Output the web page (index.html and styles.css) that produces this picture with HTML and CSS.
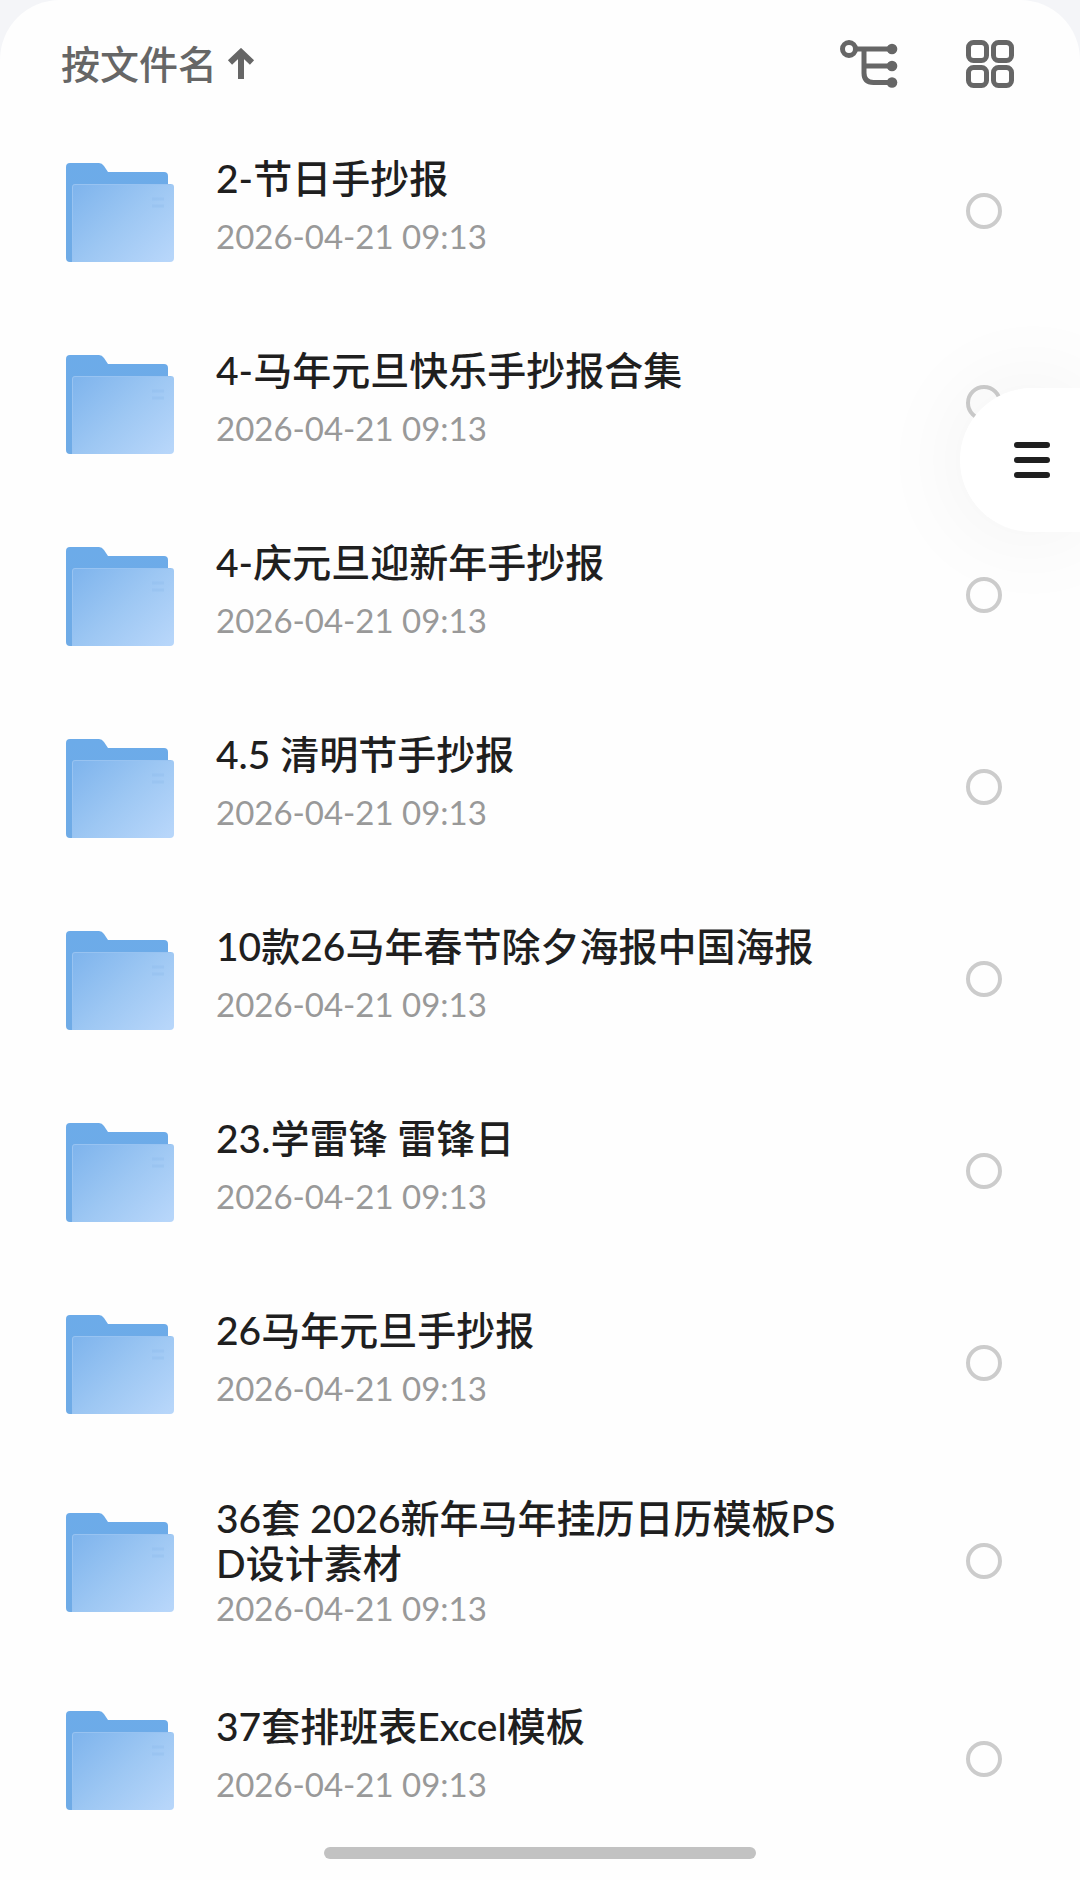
FILE: index.html
```html
<!DOCTYPE html>
<html lang="zh-CN">
<head>
<meta charset="utf-8">
<meta name="viewport" content="width=device-width, initial-scale=1">
<title>文件列表</title>
<link rel="stylesheet" href="styles.css">
</head>
<body>
<svg class="defs" aria-hidden="true">
  <defs>
    <linearGradient id="back" x1="0" y1="0" x2="0" y2="1">
      <stop offset="0" stop-color="#6cabe9"/>
      <stop offset="1" stop-color="#6fabe6"/>
    </linearGradient>
    <linearGradient id="front" x1="0" y1="0.1" x2="1" y2="0.9">
      <stop offset="0" stop-color="#80b5ed"/>
      <stop offset="0.5" stop-color="#9dc7f3"/>
      <stop offset="1" stop-color="#b7d6fa"/>
    </linearGradient>
    <symbol id="folder" viewBox="0 0 108 100">
      <path fill="url(#back)" d="M0 4a4 4 0 0 1 4-4h29q3 0 5 3l4 6h56a4 4 0 0 1 4 4v86H4a4 4 0 0 1-4-4z"/>
      <path fill="url(#front)" d="M6 24a3 3 0 0 1 3-3h96a3 3 0 0 1 3 3v71a4 4 0 0 1-4 4H6z"/>
      <path fill="none" stroke="#98c3f1" stroke-width="1" d="M6.500 98V24a2.500 2.500 0 0 1 2.500-2.500h96"/>
      <path fill="none" stroke="#8bb9ea" stroke-width="3" opacity=".35" d="M86 36h12M86 43h12"/>
    </symbol>
  </defs>
</svg>
<main class="panel">
  <header class="toolbar">
    <button class="sort" type="button">按文件名
      <svg class="sort-arrow" viewBox="0 0 28 32" aria-hidden="true"><path d="M14 31V5M3 14.500L14 4l11 10.500" fill="none" stroke="currentColor" stroke-width="6"/></svg>
    </button>
    <div class="actions">
      <button class="icon-button" type="button" aria-label="目录树">
        <svg class="tree-icon" viewBox="0 0 58 48" fill="none" stroke="currentColor" stroke-width="5" aria-hidden="true">
          <circle cx="9" cy="9" r="6.500"/>
          <path d="M17 9h35M24 9v24q0 9.500 9.500 9.500H52M24 26h28"/>
          <g fill="currentColor" stroke="none"><circle cx="52" cy="9" r="5.300"/><circle cx="52" cy="26" r="5.300"/><circle cx="52" cy="42.500" r="5.300"/></g>
        </svg>
      </button>
      <button class="icon-button" type="button" aria-label="网格视图">
        <svg class="grid-icon" viewBox="0 0 48 48" fill="none" stroke="currentColor" stroke-width="5" aria-hidden="true">
          <rect x="2.500" y="2.500" width="18" height="18" rx="5"/><rect x="27.500" y="2.500" width="18" height="18" rx="5"/>
          <rect x="2.500" y="27.500" width="18" height="18" rx="5"/><rect x="27.500" y="27.500" width="18" height="18" rx="5"/>
        </svg>
      </button>
    </div>
  </header>
  <ul class="files">
    <li><label class="file"><svg class="folder" aria-hidden="true"><use href="#folder"/></svg><span class="info"><span class="name">2-节日手抄报</span><time class="date">2026-04-21 09:13</time></span><input class="check" type="checkbox"></label></li>
    <li><label class="file"><svg class="folder" aria-hidden="true"><use href="#folder"/></svg><span class="info"><span class="name">4-马年元旦快乐手抄报合集</span><time class="date">2026-04-21 09:13</time></span><input class="check" type="checkbox"></label></li>
    <li><label class="file"><svg class="folder" aria-hidden="true"><use href="#folder"/></svg><span class="info"><span class="name">4-庆元旦迎新年手抄报</span><time class="date">2026-04-21 09:13</time></span><input class="check" type="checkbox"></label></li>
    <li><label class="file"><svg class="folder" aria-hidden="true"><use href="#folder"/></svg><span class="info"><span class="name">4.5 清明节手抄报</span><time class="date">2026-04-21 09:13</time></span><input class="check" type="checkbox"></label></li>
    <li><label class="file"><svg class="folder" aria-hidden="true"><use href="#folder"/></svg><span class="info"><span class="name">10款26马年春节除夕海报中国海报</span><time class="date">2026-04-21 09:13</time></span><input class="check" type="checkbox"></label></li>
    <li><label class="file"><svg class="folder" aria-hidden="true"><use href="#folder"/></svg><span class="info"><span class="name">23.学雷锋 雷锋日</span><time class="date">2026-04-21 09:13</time></span><input class="check" type="checkbox"></label></li>
    <li><label class="file"><svg class="folder" aria-hidden="true"><use href="#folder"/></svg><span class="info"><span class="name">26马年元旦手抄报</span><time class="date">2026-04-21 09:13</time></span><input class="check" type="checkbox"></label></li>
    <li><label class="file"><svg class="folder" aria-hidden="true"><use href="#folder"/></svg><span class="info"><span class="name">36套 2026新年马年挂历日历模板PSD设计素材</span><time class="date">2026-04-21 09:13</time></span><input class="check" type="checkbox"></label></li>
    <li><label class="file"><svg class="folder" aria-hidden="true"><use href="#folder"/></svg><span class="info"><span class="name">37套排班表Excel模板</span><time class="date">2026-04-21 09:13</time></span><input class="check" type="checkbox"></label></li>
  </ul>
</main>
<button class="drawer" type="button" aria-label="菜单">
  <svg class="menu-icon" viewBox="0 0 36 36" aria-hidden="true"><path d="M3 3h30M3 18h30M3 33h30" stroke="currentColor" stroke-width="6" stroke-linecap="round"/></svg>
</button>
<div class="home-bar"></div>
</body>
</html>
```
FILE: styles.css
```css
* {
  box-sizing: border-box;
}

body {
  margin: 0;
  background: #f4f5f8;
  color: #1f1f1f;
  font-family: Lato, "Noto Sans CJK SC", sans-serif;
}

button {
  display: flex;
  align-items: center;
  padding: 0;
  border: 0;
  background: none;
  color: #666;
  font: inherit;
}

.defs {
  position: absolute;
  width: 0;
  height: 0;
}

.panel {
  min-height: 100vh;
  padding-bottom: 24px;
  border-radius: 60px 60px 0 0;
  background: #fefefe;
}

.toolbar {
  display: flex;
  align-items: center;
  justify-content: space-between;
  padding: 40px 66px 27px 61px;
}

.sort {
  gap: 10px;
  height: 48px;
  font-size: 39px;
  font-weight: 500;
  line-height: 44px;
}

.sort-arrow {
  width: 28px;
  height: 32px;
}

.actions {
  display: flex;
  gap: 68px;
}

.tree-icon {
  width: 58px;
  height: 48px;
}

.grid-icon {
  width: 48px;
  height: 48px;
}

.files {
  margin: 0;
  padding: 0;
  list-style: none;
}

.file {
  display: flex;
  align-items: center;
  min-height: 192px;
  padding: 37px 78px 37px 66px;
}

.folder {
  flex: none;
  width: 108px;
  height: 104px;
  padding-top: 4px;
}

.info {
  display: flex;
  flex: 1;
  flex-direction: column;
  justify-content: space-between;
  min-height: 110px;
  max-height: 130px;
  margin: 0 104px 0 42px;
  padding-bottom: 8px;
}

.name {
  flex: none;
  font-size: 39px;
  font-weight: 500;
  line-height: 45px;
  word-break: break-all;
}

.date {
  flex: none;
  color: #999;
  font-size: 33px;
  line-height: 44px;
}

.check {
  flex: none;
  width: 36px;
  height: 36px;
  margin: 0;
  border: 4px solid #ccc;
  border-radius: 50%;
  appearance: none;
}

.check:checked {
  border-color: #4a90e2;
  background: #4a90e2;
}

.drawer {
  position: fixed;
  top: 388px;
  right: 0;
  width: 120px;
  height: 144px;
  padding-left: 54px;
  border-radius: 72px 0 0 72px;
  background: #fff;
  box-shadow: 0 0 100px rgba(0, 0, 0, 0.06);
  color: #1f1f1f;
}

.menu-icon {
  width: 36px;
  height: 36px;
}

.home-bar {
  position: fixed;
  bottom: 21px;
  left: 30%;
  width: 40%;
  height: 12px;
  border-radius: 6px;
  background: #c2c2c2;
}
```
